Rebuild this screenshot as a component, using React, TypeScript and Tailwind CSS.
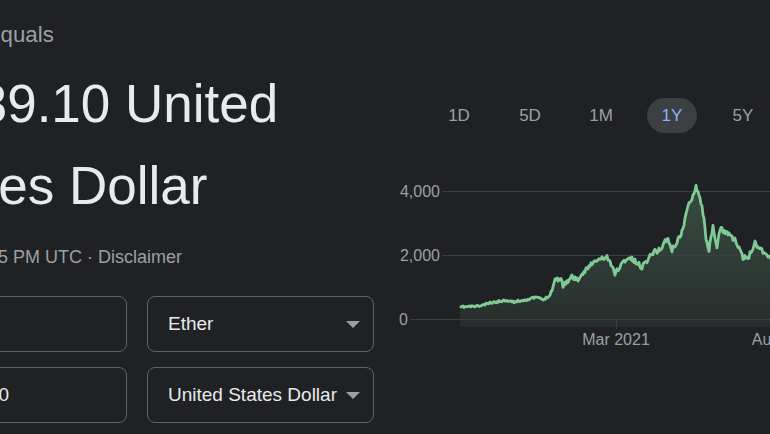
import * as React from 'react';

// rough shape of the ETH price line, in page pixels
const keyPoints: [number, number][] = [
    [460, 307], [480, 306], [490, 303], [507, 300], [513, 302], [530, 299],
    [537, 297], [543, 300], [550, 295], [555, 280], [560, 278], [563, 285],
    [572, 277], [580, 280], [587, 267], [598, 260], [607, 257], [615, 273],
    [625, 260], [630, 258], [642, 267], [653, 252], [660, 250], [667, 238],
    [672, 250], [678, 240], [682, 232], [687, 210], [692, 197], [696, 186],
    [700, 197], [703, 213], [706, 237], [709, 250], [713, 228], [717, 248],
    [720, 229], [728, 233], [735, 240], [743, 258], [748, 258], [755, 243],
    [762, 250], [770, 258], [790, 252], [810, 240],
];

function buildSeries() {
    let seed = 11;
    const rnd = () => {
        seed = (seed * 16807) % 2147483647;
        return seed / 2147483647;
    };
    const pts: [number, number][] = [];
    let k = 0;
    for (let x = 460; x <= 810; x += 1) {
        while (k < keyPoints.length - 2 && keyPoints[k + 1][0] < x) k++;
        const [x0, y0] = keyPoints[k];
        const [x1, y1] = keyPoints[k + 1];
        const t = (x - x0) / (x1 - x0);
        const y = y0 + (y1 - y0) * t;
        const amp = x < 550 ? 1 : 2.6;
        pts.push([x, y + (rnd() - 0.5) * 2 * amp]);
    }
    return pts;
}

const series = buildSeries();
const linePath = series.map(([x, y], i) => `${i ? 'L' : 'M'}${x} ${y.toFixed(1)}`).join(' ');
const areaPath = `${linePath} L810 327 L460 327 Z`;

const ranges = ['1D', '5D', '1M', '1Y', '5Y'];

function SelectBox({ label }: { label: string }) {
    return (
        <div className="flex h-[56px] w-[227px] items-center justify-between rounded-lg border border-[#5f6368] pl-[20px] pr-[13px] text-[19px] text-[#e8eaed]">
            <span className="whitespace-nowrap">{label}</span>
            <svg width="14" height="7" viewBox="0 0 14 7" className="shrink-0">
                <path d="M0 0 L14 0 L7 7 Z" fill="#9aa0a6" />
            </svg>
        </div>
    );
}

function ValueBox({ value }: { value: string }) {
    return (
        <div className="flex h-[56px] w-[217px] items-center rounded-lg border border-[#5f6368] pl-[24px] text-[19px] text-[#e8eaed]">
            {value}
        </div>
    );
}

function PriceChart() {
    return (
        <svg width="420" height="185" viewBox="395 170 420 185" className="mt-[37px] block">
            <defs>
                <linearGradient id="area" x1="0" y1="186" x2="0" y2="327" gradientUnits="userSpaceOnUse">
                    <stop offset="0" stopColor="#81c995" stopOpacity="0.26" />
                    <stop offset="1" stopColor="#81c995" stopOpacity="0.07" />
                </linearGradient>
            </defs>
            <g fontFamily="'Liberation Sans', Arial, sans-serif" fontSize="16" fill="#9aa0a6">
                <text x="440" y="191" textAnchor="end" dominantBaseline="central">4,000</text>
                <text x="440" y="255" textAnchor="end" dominantBaseline="central">2,000</text>
                <text x="408" y="319" textAnchor="end" dominantBaseline="central">0</text>
                <text x="616" y="345" textAnchor="middle">Mar 2021</text>
                <text x="786" y="345" textAnchor="middle">Aug 2021</text>
            </g>
            <path d={areaPath} fill="url(#area)" />
            <line x1="442" y1="191.5" x2="815" y2="191.5" stroke="#3c4043" />
            <line x1="442" y1="255.5" x2="815" y2="255.5" stroke="#3c4043" />
            <line x1="410" y1="319.5" x2="815" y2="319.5" stroke="#3c4043" />
            <line x1="616.5" y1="319" x2="616.5" y2="329" stroke="#3c4043" />
            <line x1="786.5" y1="319" x2="786.5" y2="329" stroke="#3c4043" />
            <path d={linePath} fill="none" stroke="#81c995" strokeWidth="2.8" strokeLinejoin="round" />
        </svg>
    );
}

export default function App() {
    return (
        <div className="h-[434px] w-[770px] overflow-hidden bg-[#202124] font-['Liberation_Sans',Arial,sans-serif]">
            <div className="ml-[-90px] flex gap-[21px]">
                {/* Result + converter */}
                <div className="w-[464px] shrink-0 pt-[21px]">
                    <div className="text-[22.3px] leading-[28px] text-[#9aa0a6]">1 Ether equals</div>
                    <div className="ml-[-6px] mt-[14px] text-[53px] leading-[82px] text-[#e8eaed]">
                        3,839.10 United States Dollar
                    </div>
                    <div className="mt-[18px] whitespace-nowrap text-[18px] leading-[24px] text-[#9aa0a6]">
                        Oct 19, 1:45 PM UTC · <span>Disclaimer</span>
                    </div>
                    <div className="mt-[27px] flex flex-col gap-[15px]">
                        <div className="flex gap-[20px]">
                            <ValueBox value="1" />
                            <SelectBox label="Ether" />
                        </div>
                        <div className="flex gap-[20px]">
                            <ValueBox value="3,839.10" />
                            <SelectBox label="United States Dollar" />
                        </div>
                    </div>
                </div>

                {/* Chart */}
                <div className="shrink-0 pt-[98px]">
                    <div className="flex gap-[21px] pl-[39px]">
                        {ranges.map((r) => (
                            <div
                                key={r}
                                className={
                                    r === '1Y'
                                        ? 'flex h-[35px] w-[50px] items-center justify-center rounded-full bg-[#3c4043] text-[17px] text-[#8ab4f8]'
                                        : 'flex h-[35px] w-[50px] items-center justify-center rounded-full text-[17px] text-[#9aa0a6]'
                                }
                            >
                                {r}
                            </div>
                        ))}
                    </div>
                    <PriceChart />
                </div>
            </div>
        </div>
    );
}
